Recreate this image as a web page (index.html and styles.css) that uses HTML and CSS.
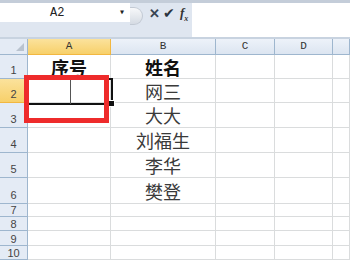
FILE: index.html
```html
<!DOCTYPE html>
<html>
<head>
    <title>Sheet1</title>
    <link rel="stylesheet" href="styles.css">
</head>
<body>
    <div class="top-band"></div>
    <div class="formula-bar">
        <div class="name-box">
            <span class="name-ref">A2</span>
            <span class="name-arrow">&#9662;</span>
        </div>
        <div class="bar-buttons">
            <span class="knob"></span>
            <span class="btn-cancel">&#10005;</span>
            <span class="btn-ok">&#10004;</span>
            <span class="btn-fx">f<sub>x</sub></span>
        </div>
        <div class="formula-input"></div>
    </div>

    <div class="sheet">
        <div class="grid">
            <div class="corner"><span class="corner-tri"></span></div>
            <div class="col-head active">A</div>
            <div class="col-head">B</div>
            <div class="col-head">C</div>
            <div class="col-head">D</div>
            <div class="col-head"></div>

            <div class="row-head">1</div>
            <div class="cell title">序号</div>
            <div class="cell title">姓名</div>
            <div class="cell"></div><div class="cell"></div><div class="cell"></div>

            <div class="row-head active">2</div>
            <div class="cell"></div>
            <div class="cell">网三</div>
            <div class="cell"></div><div class="cell"></div><div class="cell"></div>

            <div class="row-head">3</div>
            <div class="cell"></div>
            <div class="cell">大大</div>
            <div class="cell"></div><div class="cell"></div><div class="cell"></div>

            <div class="row-head">4</div>
            <div class="cell"></div>
            <div class="cell">刘福生</div>
            <div class="cell"></div><div class="cell"></div><div class="cell"></div>

            <div class="row-head">5</div>
            <div class="cell"></div>
            <div class="cell">李华</div>
            <div class="cell"></div><div class="cell"></div><div class="cell"></div>

            <div class="row-head">6</div>
            <div class="cell"></div>
            <div class="cell">樊登</div>
            <div class="cell"></div><div class="cell"></div><div class="cell"></div>

            <div class="row-head small">7</div>
            <div class="cell"></div><div class="cell"></div><div class="cell"></div><div class="cell"></div><div class="cell"></div>

            <div class="row-head small">8</div>
            <div class="cell"></div><div class="cell"></div><div class="cell"></div><div class="cell"></div><div class="cell"></div>

            <div class="row-head small">9</div>
            <div class="cell"></div><div class="cell"></div><div class="cell"></div><div class="cell"></div><div class="cell"></div>

            <div class="row-head small">10</div>
            <div class="cell"></div><div class="cell"></div><div class="cell"></div><div class="cell"></div><div class="cell"></div>
        </div>

        <!-- active cell A2 and the red mark drawn over it -->
        <div class="selection"><span class="fill-handle"></span></div>
        <div class="split-line"></div>
        <div class="red-mark"></div>
    </div>
</body>
</html>
```

FILE: styles.css
```css
body {
    margin: 0;
    padding: 0;
    width: 350px;
    height: 260px;
    overflow: hidden;
    background-color: #fff;
    font-family: "Liberation Sans", Arial, sans-serif;
}

.top-band {
    height: 3px;
    background-color: #c4cdd9;
}

.formula-bar {
    display: flex;
    height: 34px;
    background-color: #dfe6f0;
    border-bottom: 2px solid #c8d3e0;
}

    .name-box {
        width: 130px;
        height: 19px;
        background-color: #fff;
        position: relative;
        font-family: "Liberation Mono", monospace;
        font-size: 12px;
        color: #222;
    }

        .name-ref {
            position: absolute;
            left: 50px;
            top: 3px;
        }

        .name-arrow {
            position: absolute;
            left: 119px;
            top: 3px;
            font-size: 10px;
            color: #222;
        }

    .bar-buttons {
        width: 62px;
        position: relative;
    }

        .knob {
            position: absolute;
            left: 0;
            top: 4px;
            width: 12px;
            height: 16px;
            border-radius: 0 9px 9px 0;
            background: linear-gradient(#f7f8fa, #d5dbe3);
            border: 1px solid #c3cad4;
            border-left: none;
        }

        .btn-cancel {
            position: absolute;
            left: 19px;
            top: 3px;
            font-size: 13px;
            font-weight: bold;
            color: #3a4552;
        }

        .btn-ok {
            position: absolute;
            left: 33px;
            top: 2px;
            font-size: 14px;
            color: #2a3440;
        }

        .btn-fx {
            position: absolute;
            left: 50px;
            top: 2px;
            font-family: "Liberation Serif", serif;
            font-style: italic;
            font-weight: bold;
            font-size: 13px;
            color: #333;
        }

            .btn-fx sub {
                font-size: 8px;
            }

    .formula-input {
        flex: 1;
        background-color: #fff;
    }

.sheet {
    position: relative;
}

.grid {
    display: grid;
    grid-template-columns: 28px 83px 105px 59px 58px 1fr;
    grid-template-rows: 16px 24px 24px 25px 25px 25px 26px 13px 14px 15px 14px;
}

    .grid > div {
        box-sizing: border-box;
        border-right: 1px solid #dadcdd;
        border-bottom: 1px solid #dadcdd;
    }

.corner {
    position: relative;
    background-color: #e4ebf5;
    border-color: #9eb6ce !important;
}

    .corner-tri {
        position: absolute;
        right: 3px;
        bottom: 3px;
        width: 0;
        height: 0;
        border-left: 8px solid transparent;
        border-bottom: 8px solid #b9c3cf;
    }

.col-head {
    background: linear-gradient(#edf2f9, #dce5f1);
    border-color: #9eb6ce !important;
    font-family: "Liberation Mono", monospace;
    font-size: 11px;
    color: #333;
    text-align: center;
    line-height: 15px;
}

    .col-head.active {
        background: linear-gradient(#fbe29c, #f7d06a);
        border-color: #f2b740 !important;
    }

.row-head {
    background-color: #e4ebf5;
    border-color: #9eb6ce !important;
    font-size: 11px;
    color: #444;
    text-align: center;
    display: flex;
    align-items: flex-end;
    justify-content: center;
    padding-bottom: 2px;
    line-height: 11px;
}

    .row-head.active {
        background: linear-gradient(#fbe29c, #f7d06a);
        border-color: #f2b740 !important;
    }

    .row-head.small {
        padding-bottom: 0;
    }

.cell {
    font-family: "Noto Sans CJK SC", sans-serif;
    font-size: 18px;
    color: #3a3a3a;
    display: flex;
    align-items: center;
    justify-content: center;
    line-height: 18px;
}

    .cell.title {
        font-weight: bold;
        color: #111;
    }

.selection {
    position: absolute;
    left: 27px;
    top: 39px;
    width: 82px;
    height: 23px;
    border: 2px solid #111;
}

    .fill-handle {
        position: absolute;
        right: -4px;
        bottom: -4px;
        width: 5px;
        height: 5px;
        background-color: #111;
        border: 1px solid #fff;
    }

.split-line {
    position: absolute;
    left: 70px;
    top: 41px;
    width: 1px;
    height: 24px;
    background-color: #555;
}

.red-mark {
    position: absolute;
    left: 24px;
    top: 36px;
    width: 75px;
    height: 38px;
    border: 5px solid #ee2b2b;
}
```
